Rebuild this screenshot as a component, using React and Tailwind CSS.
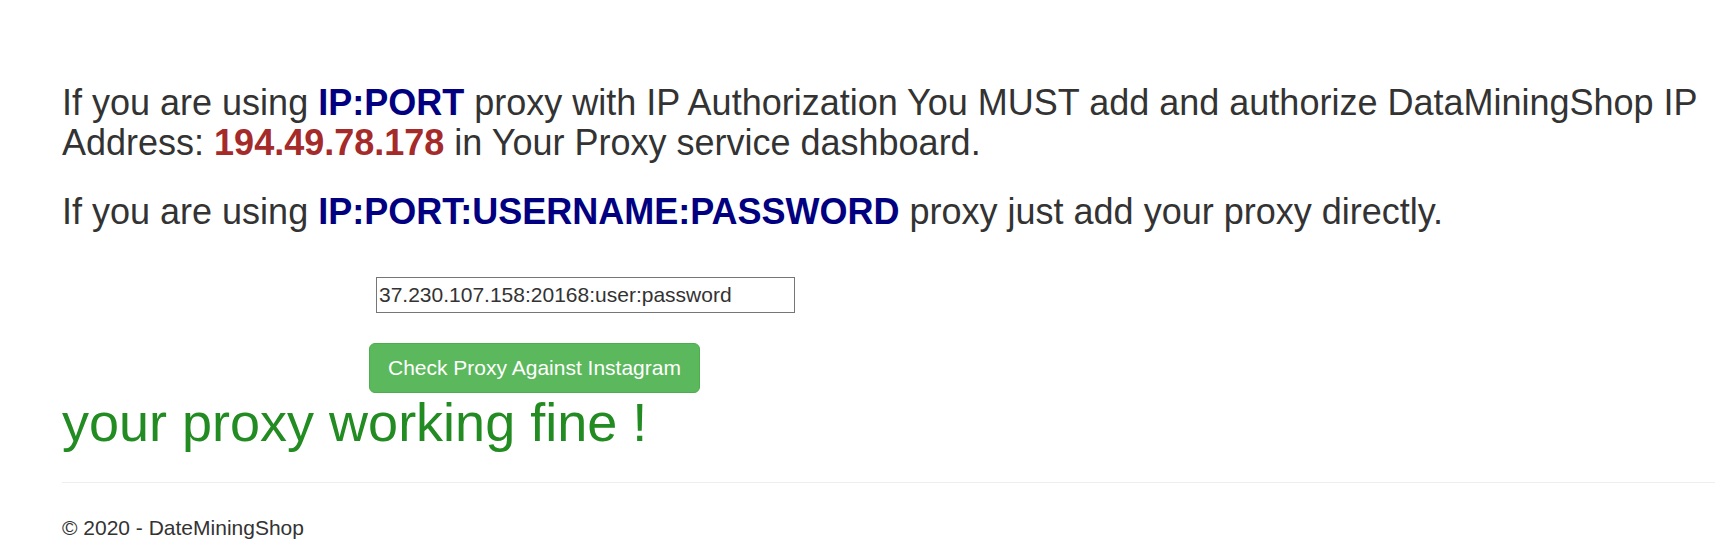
export default function App() {
  return (
    <div className="min-h-[559px] w-[1715px] overflow-hidden bg-white font-['Liberation_Sans',Arial,sans-serif] text-[#333]">
      <div className="w-[1737px] pl-[62px] pt-[83px]">
        <p className="mb-[30px] text-[36px] leading-[1.1]">
          If you are using <b className="font-bold text-[#000080]">IP:PORT</b> proxy with IP Authorization You MUST add and authorize DataMiningShop IP Address:{" "}
          <b className="font-bold text-[#a52a2a]">194.49.78.178</b> in Your Proxy service dashboard.
        </p>
        <p className="text-[36px] leading-[1.1]">
          If you are using <b className="font-bold text-[#000080]">IP:PORT:USERNAME:PASSWORD</b> proxy just add your proxy directly.
        </p>
        <div className="mt-[45px] flex flex-col items-start">
          <input
            readOnly
            value="37.230.107.158:20168:user:password"
            className="ml-[314px] h-[36px] w-[419px] border border-[#767676] px-[2px] text-[21px] text-[#333] outline-none"
          />
          <button className="ml-[307px] mt-[30px] h-[50px] rounded-[6px] border border-[#4cae4c] bg-[#5cb85c] px-[18px] text-[21px] leading-[1.42857] text-white">
            Check Proxy Against Instagram
          </button>
        </div>
        <h1 className="text-[54px] leading-[1.1] text-[#228b22]">your proxy working fine !</h1>
        <div className="mt-[30px] border-t border-[#eeeeee]" />
        <footer className="mt-[30px]">
          <p className="text-[21px] leading-[30px]">© 2020 - DateMiningShop</p>
        </footer>
      </div>
    </div>
  );
}
